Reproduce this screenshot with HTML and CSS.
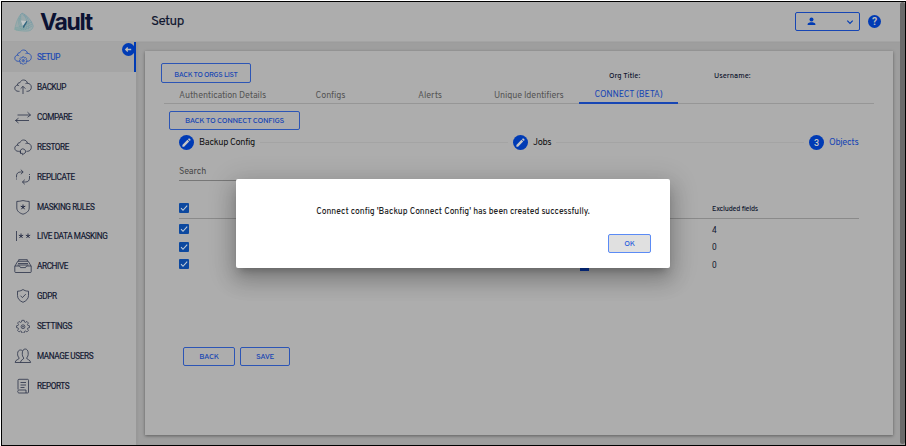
FILE: index.html
```html
<!DOCTYPE html>
<html lang="en">
<head>
<meta charset="utf-8">
<title>Vault - Setup</title>
<link rel="stylesheet" href="styles.css">
</head>
<body>
<svg class="defs" width="0" height="0">
  <symbol id="cloud" viewBox="0 0 18 16"><path d="M5.5 12.300H4.300C2.200 12.300.8 11 .8 9.200c0-1.600 1-2.800 2.600-3 0-1.700 1-2.600 2.500-2.500C6.700 1.900 8 1 9.600 1c2.100 0 3.600 1.400 3.900 3.300 2.200.1 3.800 1.600 3.800 3.900 0 2.300-1.500 4-3.700 4.100h-1.100M3.400 6.200c.7 0 1.200.2 1.700.6M13.500 4.300c-.8-.1-1.400 0-2 .3"/></symbol>
  <symbol id="gear" viewBox="0 0 16 16"><path d="M6.700 1.500h2.600l.4 1.900 1.200.5 1.600-1.100 1.700 1.800-1.100 1.600.5 1.200 1.900.4v2l-1.900.4-.5 1.200 1.100 1.600-1.700 1.800-1.600-1.100-1.200.5-.4 1.900H6.700l-.4-1.900-1.200-.5-1.600 1.100L1.800 13l1.100-1.600-.5-1.200-1.900-.4v-2l1.900-.4.500-1.200-1.100-1.600 1.700-1.800 1.600 1.100 1.200-.5z"/><circle cx="8" cy="8.800" r="2.200"/><circle cx="8" cy="8.800" r=".6"/></symbol>
  <symbol id="check" viewBox="0 0 10 10"><path d="M2 5.200l2 2.100 4.200-4.700"/></symbol>
  <symbol id="pencil" viewBox="0 0 24 24"><path d="M3 17.250V21h3.750L17.810 9.940l-3.750-3.750zM20.710 7.040a1 1 0 0 0 0-1.410l-2.340-2.340a1 1 0 0 0-1.410 0l-1.830 1.830 3.750 3.750z"/></symbol>
</svg>
<div class="app">
  <header class="header">
    <div class="brand">
      <svg class="logo" viewBox="0 0 20 20">
        <defs><linearGradient id="lg" x1="0" y1="1" x2="1" y2="0"><stop offset="0" stop-color="#6aa39d"/><stop offset=".55" stop-color="#5f97a0"/><stop offset="1" stop-color="#4b7fa0"/></linearGradient></defs>
        <g fill="none" stroke="url(#lg)" stroke-width=".4">
          <path d="M8 1C4.500 4 2 10 .6 17.500c4 1.500 10 2 14 1.500 2.500-.5 4.200-2 4.700-5C17.500 8.500 13 3 8 1z" fill="#9aa9ab"/>
          <path d="M7 2C6 7 7 13 12 18M6 4c-1 5 0 10 4 14M5 6c-1 5 0 9 3 12M1 16c6-1 12-4 17-6M1 17c7 0 13-2 17-5M2 18c7 0 12-1 16-4M8 1.500c5 4 6 9 4 16M10 2.500c5 4 6 9 4 15"/>
          <path d="M6.800 8.500L12.500 9 9 14.500z" fill="#c2c8c9" stroke="none"/>
          <path d="M12.500 9l1 .6L9.600 16.500l-.8-2.200z" fill="#31667f" stroke="none"/>
        </g>
      </svg>
      <span class="brand-name">Vault</span>
    </div>
    <h1 class="page-title">Setup</h1>
    <div class="account">
      <svg class="user" viewBox="0 0 10 10"><circle cx="5" cy="2.700" r="2.200"/><path d="M.7 9V7.700C.7 6.300 3.400 5.700 5 5.700s4.300.6 4.300 2V9z"/></svg>
      <svg class="chevron" viewBox="0 0 8 8"><path d="M1.300 2.600L4 5.300l2.700-2.700"/></svg>
    </div>
    <div class="help">?</div>
  </header>
  <div class="body">
    <nav class="sidebar">
      <div class="item active"><svg class="icon" viewBox="0 0 18 18"><use href="#cloud" width="18" height="16" y="1"/><use href="#gear" x="5" y="8" width="8.500" height="8.500" stroke-width="1.300"/></svg><span>SETUP</span>
        <svg class="collapse" viewBox="0 0 12 12"><circle cx="6" cy="6" r="6"/><path d="M8.500 6h-5M5.300 4.200L3.500 6l1.800 1.800"/></svg>
      </div>
      <div class="item"><svg class="icon" viewBox="0 0 18 18"><use href="#cloud" width="18" height="16" y="1"/><path d="M9 16V8.500M6.600 10.700L9 8.300l2.400 2.400"/></svg><span>BACKUP</span></div>
      <div class="item"><svg class="icon" viewBox="0 0 18 18"><path d="M3.500 7h13M13.500 4.200L16.500 7l-3 2.300M15 12.500H1.500M4.500 10.200l-3 2.300 3 2.500"/></svg><span>COMPARE</span></div>
      <div class="item"><svg class="icon" viewBox="0 0 18 18"><use href="#cloud" width="18" height="16" y="1"/><path d="M6.500 15.200a2.800 2.800 0 1 1 4.800-.2M6.500 13v2.400h2.300M8 17l3-2"/></svg><span>RESTORE</span></div>
      <div class="item"><svg class="icon" viewBox="0 0 18 18"><path d="M2.500 9.500V8c0-2.500 1.500-4 4-4h2.500M6.800 1.700L9.200 4 6.800 6.300M15.500 8v2c0 2.700-1.500 4-4 4H8.500M10.800 11.700L8.400 14l2.400 2.300M2.500 10.500v1M15.500 6v1"/></svg><span>REPLICATE</span></div>
      <div class="item"><svg class="icon" viewBox="0 0 18 18"><path d="M2.800 3.400c4 0 4.800-.8 6.200-.8s2.200.8 6.200.8V10c0 3.300-3 5.200-6.200 6.200C5.800 15.200 2.800 13.300 2.800 10z"/><path d="M9 6.500V9l-2.300-.8M9 9l2.300-.8M9 9l-1.500 2.200M9 9l1.500 2.200" stroke-width="1"/></svg><span>MASKING RULES</span></div>
      <div class="item"><svg class="icon" viewBox="0 0 18 18"><path d="M2.500 4v10"/><path d="M7 6.500V9l-2.200-.8M7 9l2.200-.8M7 9l-1.500 2M7 9l1.500 2M14 6.500V9l-2.200-.8M14 9l2.200-.8M14 9l-1.500 2M14 9l1.500 2" stroke-width=".9"/></svg><span>LIVE DATA MASKING</span></div>
      <div class="item"><svg class="icon" viewBox="0 0 18 18"><path d="M.8 9h4.700l1 1.600h5l1-1.600h4.700v5.700q0 .8-.8.8H1.600q-.8 0-.8-.8zM1 9l2.700-4.700h10.600L17 9M4 6.500h10M4.700 4.200V2.700h8.600v1.500M3.500 8h11"/></svg><span>ARCHIVE</span></div>
      <div class="item"><svg class="icon" viewBox="0 0 18 18"><path d="M3.500 4.200C6.300 4.200 7.800 3.300 9 2.500c1.200.8 2.700 1.700 5.500 1.700v4.300c0 3.300-2.300 5.500-5.500 6.800-3.200-1.300-5.500-3.500-5.500-6.800zM6.500 8.700l1.900 1.900 3.400-3.500"/></svg><span>GDPR</span></div>
      <div class="item"><svg class="icon" viewBox="0 0 18 18"><use href="#gear" x="2" y="2" width="14" height="14"/></svg><span>SETTINGS</span></div>
      <div class="item"><svg class="icon" viewBox="0 0 18 18"><path d="M1.200 15.500c0-3.200 4-2.500 4-4.500C4 9.700 3.500 8.500 3.600 6.500 3.700 4 5 3 6.500 3c.8 0 1.500.3 2 .8M6.700 15.500H1.200M6.500 15.500c0-3 3.300-2.700 3.300-4.500-1.200-1.300-1.600-2.500-1.500-5C8.400 3.500 9.500 2 11.200 2c1.700 0 2.900 1.500 3 4 .1 2.500-.4 3.700-1.600 5 0 1.800 4 1.500 4 4.500z"/></svg><span>MANAGE USERS</span></div>
      <div class="item"><svg class="icon" viewBox="0 0 18 18"><path d="M4 12.500V3.300q0-1 1-1h8.500q1 0 1 1V15q0 1-1 1H5.200c-2 0-2-3 0-3H12v3M6.500 5.500h5.500M6.500 8h5.500M6.500 10.500h4"/></svg><span>REPORTS</span></div>
    </nav>
    <main class="content">
      <section class="card">
        <div class="org-row">
          <button class="btn orgs"><span>BACK TO ORGS LIST</span></button>
          <span class="org-title">Org Title:</span>
          <span class="org-user">Username:</span>
        </div>
        <div class="tabs">
          <div class="tab t1"><span>Authentication Details</span></div>
          <div class="tab t2"><span>Configs</span></div>
          <div class="tab t3"><span>Alerts</span></div>
          <div class="tab t4"><span>Unique Identifiers</span></div>
          <div class="tab t5 selected"><span>CONNECT (BETA)</span></div>
        </div>
        <button class="btn configs"><span>BACK TO CONNECT CONFIGS</span></button>
        <div class="stepper">
          <i class="dot"><svg viewBox="0 0 24 24"><use href="#pencil"/></svg></i><span class="s1">Backup Config</span>
          <hr class="line">
          <i class="dot"><svg viewBox="0 0 24 24"><use href="#pencil"/></svg></i><span class="s2">Jobs</span>
          <hr class="line">
          <i class="dot step">3</i><span class="s3">Objects</span>
        </div>
        <div class="search"><span>Search</span></div>
        <div class="table">
          <div class="row head"><i class="box"><svg viewBox="0 0 10 10"><use href="#check"/></svg></i><span class="excluded">Excluded fields</span></div>
          <div class="row"><i class="box"><svg viewBox="0 0 10 10"><use href="#check"/></svg></i><span class="num">4</span></div>
          <div class="row"><i class="box"><svg viewBox="0 0 10 10"><use href="#check"/></svg></i><span class="num">0</span></div>
          <div class="row"><i class="box"><svg viewBox="0 0 10 10"><use href="#check"/></svg></i><span class="name">Contact</span><span class="mode">Selected</span><i class="square"></i><span class="num">0</span></div>
        </div>
        <div class="actions"><button class="btn back"><span>BACK</span></button><button class="btn save"><span>SAVE</span></button></div>
      </section>
    </main>
  </div>
  <div class="scrollbar"></div>
  <div class="dialog" role="dialog">
    <p>Connect config 'Backup Connect Config' has been created successfully.</p>
    <button class="btn ok"><span>OK</span></button>
  </div>
</div>
</body>
</html>
```
FILE: styles.css
```css
* { box-sizing: border-box; }
body { margin: 0; background: #fff; font-family: Overpass, Roboto, "Liberation Sans", sans-serif; color: #10162f; overflow: hidden; }
.defs { position: absolute; }
svg { display: block; }
span, p, h1 { white-space: nowrap; }
.app { position: relative; width: 905px; height: 445px; margin: 1px 0 0 1px; border: 1px solid #000; background: #9e9e9e; overflow: hidden; }

.header { height: 40px; background: #adadad; display: flex; align-items: center; border-bottom: 1px solid #a4a4a4; }
.brand { width: 149px; display: flex; align-items: center; padding: 1px 0 0 12px; }
.logo { width: 20px; height: 20px; }
.brand-name { margin-left: 6px; font: 700 23px/30px Inter, sans-serif; letter-spacing: -1.300px; color: #0b1233; }
.page-title { margin: 0; padding-top: 1px; font-size: 13.500px; line-height: 18px; font-weight: 400; letter-spacing: -.45px; width: 644px; -webkit-text-stroke: .15px; }
.account { width: 65px; height: 19px; border: 1px solid #1746b4; border-radius: 2px; display: flex; align-items: center; justify-content: space-between; padding: 0 5px 0 11px; }
.user { width: 9px; height: 9px; fill: #003bb5; }
.chevron { width: 8px; height: 8px; fill: none; stroke: #003bb5; stroke-width: 1.200; }
.help { margin: -1px 0 0 8px; width: 13px; height: 13px; border-radius: 50%; background: #003bb5; color: #bbb; font: 700 10.500px/13px Roboto, sans-serif; text-align: center; }

.body { display: flex; height: 403px; }
.sidebar { width: 134px; background: #adadad; }
.item { position: relative; height: 29.850px; display: flex; align-items: center; padding: 1px 0 0 12px; font: 400 8.200px/12px Roboto, sans-serif; letter-spacing: -.38px; color: #10162f; -webkit-text-stroke: .15px; }
.item span { margin-left: 5px; }
.icon { width: 18px; height: 18px; fill: none; stroke: #222942; stroke-width: .75; stroke-linejoin: round; -webkit-text-stroke: 0; }
.item.active { background: #a5a5a5; color: #1746b4; border-right: 2px solid #003bb5; }
.active .icon { stroke: #1746b4; }
.collapse { position: absolute; left: 120px; top: 1px; width: 13px; height: 13px; fill: #003bb5; }
.collapse path { fill: none; stroke: #bbb; stroke-width: 1.200; }

.content { padding: 9px 0 0 9px; flex: 1; box-shadow: inset 2px 0 2px rgba(0,0,0,.04); }
.card { width: 748px; height: 384px; background: #adadad; box-shadow: 0 1px 3px rgba(0,0,0,.4); display: flex; flex-direction: column; align-items: flex-start; }

.btn { display: block; margin: 0; padding: 0; background: none; border: 1px solid #2c55b5; border-radius: 2px; color: #1746b4; font: 500 7.900px/19px Overpass, Roboto, sans-serif; text-align: center; letter-spacing: -.25px; }
.org-row { display: flex; margin: 12px 0 0 16px; height: 20px; font-weight: 500; font-size: 7.500px; line-height: 26px; }
.orgs { width: 90px; height: 20px; line-height: 23px; font-size: 7.400px; letter-spacing: -.3px; }
.org-title { margin-left: 358px; width: 105px; }
.tabs { display: flex; width: 710px; height: 21px; margin-left: 19px; border-bottom: 1px solid #969696; font-size: 9px; line-height: 25px; letter-spacing: -.1px; color: #555; }
.tab { height: 21px; }
.t1 { margin-left: 15px; width: 136.500px; }
.t2 { width: 102.500px; }
.t3 { width: 76px; }
.t4 { width: 85px; }
.selected { width: 99px; text-align: center; color: #1746b4; border-bottom: 2px solid #1746b4; line-height: 24px; letter-spacing: -.15px; }
.configs { width: 131px; height: 19px; margin: 7px 0 0 24px; }

.stepper { display: flex; align-items: center; height: 15px; width: 680px; margin: 5px 0 0 34px; font-size: 9.200px; letter-spacing: -.3px; color: #111; }
.dot { width: 15px; height: 15px; border-radius: 50%; background: #003bb5; flex: none; display: flex; align-items: center; justify-content: center; color: #c6c6c6; font-style: normal; font-size: 9px; font-weight: 500; }
.dot svg { width: 11px; height: 11px; fill: #c6c6c6; }
.step { font-family: Roboto, sans-serif; }
.stepper span { margin-left: 5px; flex: none; padding-top: 1px; }
.s1 { width: 56px; }
.s2 { width: 18px; }
.s3 { color: #1746b4; }
.stepper .line { margin: 0 5px; border: 0; height: 1px; background: #a4a4a4; flex: 1; }
.stepper .s3 { width: 30px; }

.search { margin: 12px 0 0 34px; width: 110px; height: 19px; border-bottom: 1px solid #777; color: #484848; font-size: 9px; line-height: 19px; letter-spacing: -.1px; }
.table { margin: 17px 0 0 34px; width: 680px; }
.row { height: 17.500px; display: grid; grid-template-columns: 134px 132px 134px 133px 1fr; align-items: center; font-size: 8px; }
.row > * { grid-row: 1; }
.row > span { padding-top: 2px; }
.row > .num { padding-top: 1px; }
.head { height: 21px; margin-bottom: 1.500px; border-bottom: 1px solid #8a8a8a; font-weight: 500; font-size: 7.200px; letter-spacing: -.22px; }
.box { width: 10px; height: 10px; border-radius: 1px; background: #0c489f; }
.box svg { width: 10px; height: 10px; fill: none; stroke: #c0cbd8; stroke-width: 1.100; }
.excluded, .num { grid-column: 5; }
.num { font: 400 8.300px/10px Roboto, sans-serif; }
.name { grid-column: 2; }
.mode { grid-column: 3; }
.square { grid-column: 4; width: 9px; height: 9px; margin: 4px 0 0 1px; background: #0736a5; }
.actions { display: flex; gap: 5px; margin: 73.500px 0 0 38px; }
.back { width: 52px; height: 19px; }
.save { width: 50px; height: 19px; }

.scrollbar { position: absolute; right: 0; top: 0; width: 5px; height: 442px; border-radius: 3px; background: #6b6b6b; }
.dialog { position: absolute; left: 234px; top: 177px; width: 434px; height: 89px; background: #fff; border-radius: 2px; padding: 26px 19px 0 20px; display: flex; flex-direction: column; box-shadow: 0 6px 8px -4px rgba(0,0,0,.25), 0 12px 20px 2px rgba(0,0,0,.16), 0 5px 26px 5px rgba(0,0,0,.14); }
.dialog p { margin: 0 0 0 -1px; text-align: center; font-size: 8.500px; font-weight: 500; line-height: 14px; color: #222; }
.ok { width: 43px; height: 19px; margin: 15px 0 0 auto; background: #e0e0e0; border-color: #5b8bf5; color: #2b5fdd; }
```
